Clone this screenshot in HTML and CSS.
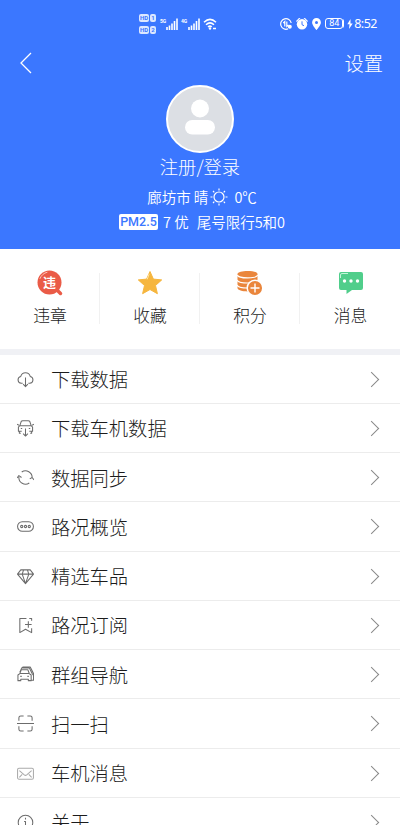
FILE: index.html
```
<!DOCTYPE html>
<html lang="zh-CN">
<head>
<meta charset="utf-8">
<title>个人中心</title>
<link rel="stylesheet" href="styles.css">
</head>
<body>
<div class="screen">
  <header class="hero">
    <div class="status">
      <div class="status-left">
        <div class="hd"><span class="hd-row"><b>HD</b><b class="sim">1</b></span><span class="hd-row"><b>HD</b><b class="sim">2</b></span></div>
        <span class="net">5G</span>
        <svg class="signal" width="12" height="12" viewBox="0 0 12 12"><path d="M1 9v3M3.500 7.500V12M6 5.500V12M8.500 3V12M11 .5V12"/></svg>
        <span class="net net-4g">4G</span>
        <svg class="signal" width="12" height="12" viewBox="0 0 12 12"><path d="M1 9v3M3.500 7.500V12M6 5.500V12M8.500 3V12M11 .5V12"/></svg>
        <svg class="wifi" width="14" height="12" viewBox="0 0 14 12"><path d="M1 4.200Q7-1.500 13 4.200M3 6.700Q7 3 11 6.700M5 9Q7 7.200 8.700 9"/><circle cx="7" cy="10.500" r="1.200"/><path d="M10 10.500h3"/></svg>
      </div>
      <div class="status-right">
        <svg width="12" height="12" viewBox="0 0 12 12"><path class="ln" d="M8 10.900A5.300 5.300 0 1 1 11.200 5M4.800 8.500V3.500L3.300 5M6.800 3.500v5L8.500 7"/><circle cx="9.800" cy="8.700" r="2" fill="#fff"/></svg>
        <svg width="12" height="12" viewBox="0 0 12 12"><path fill="#fff" d="M0 3 3 0h1.500L.8 4ZM12 3 9 0H7.500l3.700 4Z"/><circle cx="6" cy="6.300" r="5.200" fill="#fff"/><path d="M6 3.300v3.400l2 1M2 11l-1 1M10 11l1 1" fill="none" stroke="#3b77ff"/></svg>
        <svg class="pin" width="9" height="12" viewBox="0 0 9 12"><path fill="#fff" fill-rule="evenodd" d="M4.500 0A4.400 4.400 0 0 0 .1 4.400C.1 7.200 4.500 12 4.500 12s4.400-4.800 4.400-7.600A4.400 4.400 0 0 0 4.500 0Zm0 2.900a1.500 1.500 0 1 1 0 3 1.500 1.500 0 0 1 0-3Z"/></svg>
        <span class="battery">84</span>
        <svg class="bolt" width="6" height="10" viewBox="0 0 6 10"><path fill="#fff" d="M3.500 0 .3 5.300h2.200L2 10l3.700-5.600H3.500Z"/></svg>
        <span class="time">8:52</span>
      </div>
    </div>
    <nav class="topbar">
      <svg width="12" height="22" viewBox="0 0 12 22"><path class="back" d="M11 1 1 11l10 10"/></svg>
      <span class="settings">设置</span>
    </nav>
    <div class="avatar">
      <svg width="64" height="64" viewBox="0 0 64 64"><circle cx="32" cy="21.500" r="9" fill="#fff"/><rect x="17" y="33" width="30" height="14.500" rx="7.250" fill="#fff"/></svg>
    </div>
    <div class="login">注册/登录</div>
    <div class="weather"><span>廊坊市 晴</span><svg width="18" height="18" viewBox="0 0 18 18"><circle cx="9" cy="9" r="5"/><path d="M9 .5v2M9 15.500v2M.5 9h2M15.500 9h2M3 3l1.300 1.300M13.700 13.700 15 15M3 15l1.300-1.300M13.700 4.300 15 3"/></svg><span class="temp">0℃</span></div>
    <div class="air"><span class="pm">PM2.5</span><span class="quality">7 优</span><span class="limit">尾号限行5和0</span></div>
  </header>

  <section class="shortcuts">
    <div class="shortcut">
      <div class="badge-icon"><svg width="26" height="26" viewBox="0 0 26 26"><path d="m19 19 4.500 4.500" stroke="#ea5b47" stroke-width="3.500" stroke-linecap="round"/><circle cx="12.500" cy="12.500" r="12" fill="#ea5b47"/><path d="M3 8.500Q5 3.500 10 2.300" fill="none" stroke="#ffc5b8" stroke-linecap="round"/></svg><span class="badge-text">违</span></div>
      <span>违章</span>
    </div>
    <div class="shortcut">
      <div class="badge-icon"><svg width="26" height="26" viewBox="0 0 26 26"><path d="m13 1.500 3.400 7.600 8.300.8-6.200 5.600 1.900 8.200L13 19.500l-7.400 4.200 1.900-8.200L1.300 9.900l8.300-.8Z" fill="#f6b63e" stroke="#f6b63e" stroke-linejoin="round"/><path d="M12 4.500 10.300 9" stroke="#ffe5a6" stroke-linecap="round"/></svg></div>
      <span>收藏</span>
    </div>
    <div class="shortcut">
      <div class="badge-icon"><svg width="26" height="26" viewBox="0 0 26 26"><path d="M.5 4C.5-.1 20.500-.1 20.500 4v14c0 4.500-20 4.500-20 0Z" fill="#ea863c"/><path d="M.5 5c0 3.800 20 3.800 20 0M0 10c1 4 20 4 21 0M0 15c1 4 20 4 21 0" fill="none" stroke="#fff" stroke-width="1.200"/><circle cx="18" cy="18" r="7.800" fill="#ea863c" stroke="#fff" stroke-width="1.500"/><path d="M18 13.500v9M13.500 18h9" stroke="#fff" stroke-width="1.400"/></svg></div>
      <span>积分</span>
    </div>
    <div class="shortcut">
      <div class="badge-icon"><svg width="26" height="26" viewBox="0 0 26 26"><path d="M3 2h20q2 0 2 2v14q0 2-2 2h-9l-5.500 4v-4H3q-2 0-2-2V4q0-2 2-2Z" fill="#50ce8b"/><path d="M2.500 8V5Q2.500 3.500 4 3.500h6" fill="none" stroke="#c4f5d9"/><g fill="#fff"><circle cx="6.500" cy="11" r="1.700"/><circle cx="13" cy="11" r="1.700"/><circle cx="19.500" cy="11" r="1.700"/></g></svg></div>
      <span>消息</span>
    </div>
  </section>

  <main class="menu">
    <div class="row"><svg class="icon" viewBox="0 0 18 18"><path d="M6 13H4.500A3.700 3.700 0 0 1 4 5.700a5.200 5.200 0 0 1 10 0 3.700 3.700 0 0 1-.5 7.300H12M9 7v9M6.500 14 9 16.500l2.500-2.500"/></svg><span>下载数据</span><i class="arrow"></i></div>
    <div class="row"><svg class="icon" viewBox="0 0 18 18"><path d="M3 6 4.500 1.500Q5 .8 6 .8h6q1 0 1.500.7L15 6M5 12H1.500V7.500L3 6h12l1.500 1.500V12H13M2.500 12v2H4M15.500 12v2H14M0 4.500l2 1M18 4.500l-2 1M4 9h1.500M12.500 9H14M9 9v8M6.500 14.500 9 17l2.500-2.500"/></svg><span>下载车机数据</span><i class="arrow"></i></div>
    <div class="row"><svg class="icon" viewBox="0 0 18 18"><path d="M5 3.200A7 7 0 0 1 16 9.500M13 14.800A7 7 0 0 1 2 8.500M0 9.500l2-2.500 2.800 2M18 11.500l-2-2.500-2.500 1.500"/></svg><span>数据同步</span><i class="arrow"></i></div>
    <div class="row"><svg class="icon" viewBox="0 0 18 18"><rect x=".6" y="4" width="16.800" height="10" rx="5"/><circle cx="5" cy="9" r="1.200"/><circle cx="9" cy="9" r="1.200"/><circle cx="13" cy="9" r="1.200"/></svg><span>路况概览</span><i class="arrow"></i></div>
    <div class="row"><svg class="icon" viewBox="0 0 18 18"><path d="M4 2h10l3.500 4.500L9 16.500.5 6.500ZM.5 6.500h17M5.500 6.500 9 16.500l3.500-10L11 2M5.500 6.500 7 2"/></svg><span>精选车品</span><i class="arrow"></i></div>
    <div class="row"><svg class="icon" viewBox="0 0 18 18"><path d="M10 1.500H3v15L9 13l6.500 3.500V12M13 1.500h2.500V4M12 4.500v7M8.500 8h7"/></svg><span>路况订阅</span><i class="arrow"></i></div>
    <div class="row"><svg class="icon" viewBox="0 0 18 18"><path d="M1 15.500v-6L3 8l1.500-4h7L13 8l2 1.500v6h-3V14H4v1.500ZM3 8h10M3.500 11H5M11 11h1.500M3 6.500 5 2h8l3 6 1.500 2v5H15M5 2l1.500-1H14l3.500 7v2"/></svg><span>群组导航</span><i class="arrow"></i></div>
    <div class="row"><svg class="icon" viewBox="0 0 18 18"><path d="M2 6V3q0-2 2-2h3M11 1h3q2 0 2 2v3M0 9h18M2 12v3q0 2 2 2h3M11 17h3q2 0 2-2v-3"/></svg><span>扫一扫</span><i class="arrow"></i></div>
    <div class="row"><svg class="icon pale" viewBox="0 0 18 18"><rect x=".6" y="3.500" width="16.800" height="11.500" rx="1.500"/><path d="m2.500 6 5.200 4.500q1.300 1 2.600 0L15.500 6M2.500 13l3-3M15.500 13l-3-3"/></svg><span>车机消息</span><i class="arrow"></i></div>
    <div class="row"><svg class="icon" viewBox="0 0 18 18"><circle cx="9" cy="9" r="7.700"/><path d="M9 4v1.800M7.500 8H9v5M7 13h4"/></svg><span>关于</span><i class="arrow"></i></div>
  </main>
</div>
</body>
</html>
```
FILE: styles.css
```
* { box-sizing: border-box; }
body {
  margin: 0;
  background: #fff;
  font-family: "Noto Sans CJK SC", "Noto Sans", sans-serif;
  font-weight: 300;
  color: #1c1c1c;
}
svg { display: block; flex: none; }
.screen { width: 400px; height: 825px; overflow: hidden; }
.hero {
  height: 248.500px;
  background: #3b77ff;
  color: #fff;
  display: flex;
  flex-direction: column;
  align-items: center;
}
.status {
  width: 100%;
  height: 40px;
  padding: 7px 23px 0 139px;
  display: flex;
  justify-content: space-between;
  align-items: center;
}
.status-left, .status-right { display: flex; align-items: center; }
.hd { display: flex; flex-direction: column; gap: 4px; margin-right: 4px; }
.hd-row { display: flex; gap: 1px; }
.hd b {
  width: 10px;
  height: 8px;
  border-radius: 2px;
  background: #dce7ff;
  color: #3b77ff;
  font: 700 6px/8px Roboto, sans-serif;
  text-align: center;
}
.hd .sim { width: 6px; }
.net { width: 6px; height: 12px; font: 700 5px/6px Roboto, sans-serif; }
.net-4g { margin-left: 3px; width: 7px; }
.signal path { fill: none; stroke: #fff; stroke-width: 1.6; }
.wifi { margin-left: 3px; }
.wifi path { fill: none; stroke: #fff; stroke-width: 1.5; }
.wifi circle { fill: #fff; }
.ln { fill: none; stroke: #fff; stroke-width: 1.2; }
.status-right { gap: 4px; }
.battery {
  width: 18px;
  height: 11px;
  border: 1px solid #fff;
  border-radius: 3px;
  font: 400 9px/9px Roboto, sans-serif;
  text-align: center;
  box-shadow: 2px 0 0 -1px #fff;
}
.bolt { margin-right: -3px; }
.time { font: 400 12.500px/14px "Noto Sans", sans-serif; letter-spacing: -0.500px; }
.topbar {
  width: 100%;
  height: 45px;
  padding: 0 17px 0 20px;
  display: flex;
  justify-content: space-between;
  align-items: center;
}
.back { fill: none; stroke: #fff; stroke-width: 1.3; }
.settings { font-size: 19.300px; line-height: 28px; }
.avatar {
  width: 68px;
  height: 68px;
  border: 2px solid #fff;
  border-radius: 50%;
  background: #dcdfe4;
}
.login { font-size: 18.300px; line-height: 28px; margin-top: -1px; }
.weather {
  height: 26px;
  margin-top: 4px;
  margin-left: 4px;
  display: flex;
  align-items: center;
  font-size: 14.500px;
  font-weight: 350;
  line-height: 26px;
}
.weather svg { margin-left: 2px; fill: none; stroke: #fff; stroke-width: 1.2; }
.temp { margin-left: 6px; }
.air {
  height: 24px;
  margin-left: 4px;
  display: flex;
  align-items: center;
  font-size: 14.500px;
  font-weight: 350;
  line-height: 24px;
}
.pm {
  width: 39px;
  height: 16px;
  border-radius: 2px;
  background: #fff;
  color: #3b77ff;
  font: 500 12.500px/16px Roboto, sans-serif;
  text-align: center;
}
.quality { margin-left: 5px; }
.limit { margin-left: 8px; }
.shortcuts {
  height: 106px;
  border-bottom: 6px solid #f0f1f5;
  display: grid;
  grid-template-columns: repeat(4, 1fr);
}
.shortcut {
  height: 51px;
  margin-top: 24px;
  padding-left: 1px;
  border-right: 1px solid #f1f1f1;
  display: flex;
  flex-direction: column;
  align-items: center;
  font-size: 16.800px;
  line-height: 24px;
}
.shortcut:last-child { border-right: 0; }
.badge-icon { position: relative; width: 26px; height: 26px; margin-top: -3px; margin-bottom: 7.500px; }
.badge-text {
  position: absolute;
  left: 0;
  top: 0;
  width: 25px;
  color: #fff;
  font-size: 13px;
  font-weight: 700;
  line-height: 24px;
  text-align: center;
}
.row {
  height: 49.250px;
  padding: 1px 20px 0 17px;
  border-bottom: 1px solid #ececec;
  display: flex;
  align-items: center;
  font-size: 19.300px;
  line-height: 28px;
}
.row span { flex: 1; margin-left: 17px; }
.icon { width: 17px; height: 17px; fill: none; stroke: #6c6c6c; stroke-width: 1.1; stroke-linejoin: round; }
.pale { stroke: #aaa; }
.arrow {
  width: 11px;
  height: 11px;
  margin-right: 3px;
  border-top: 1px solid #888;
  border-right: 1px solid #888;
  transform: rotate(45deg);
}
```
